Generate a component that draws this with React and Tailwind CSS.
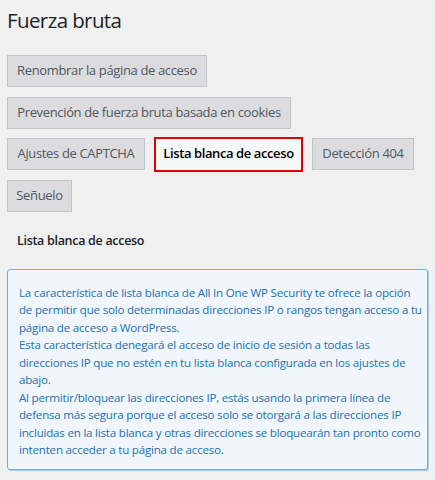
const tabBase =
  "h-[32px] flex items-center justify-center border border-[#c3c4c7] bg-[#dcdcde] text-[#50575e] text-[13px] tracking-[-0.35px] whitespace-nowrap";

function Tab({ w, children }) {
  return <div className={tabBase + " " + w}>{children}</div>;
}

const lines = [
  "La característica de lista blanca de All In One WP Security te ofrece la opción",
  "de permitir que solo determinadas direcciones IP o rangos tengan acceso a tu",
  "página de acceso a WordPress.",
  "Esta característica denegará el acceso de inicio de sesión a todas las",
  "direcciones IP que no estén en tu lista blanca configurada en los ajustes de",
  "abajo.",
  "Al permitir/bloquear las direcciones IP, estás usando la primera línea de",
  "defensa más segura porque el acceso solo se otorgará a las direcciones IP",
  "incluidas en la lista blanca y otras direcciones se bloquearán tan pronto como",
  "intenten acceder a tu página de acceso.",
];

export default function App() {
  return (
    <div className="min-h-[480px] w-[435px] bg-[#f0f0f1] pl-[7px] pt-[6px] font-['Open_Sans',sans-serif]">
      <h1 className="h-[29px] leading-[29px] text-[20.5px] tracking-[-0.6px] text-[#1d2327] font-normal">
        Fuerza bruta
      </h1>
      <div className="mt-[20px] flex flex-col items-start gap-y-[9.5px] w-[421px]">
        <Tab w="w-[200px]">Renombrar la página de acceso</Tab>
        <Tab w="w-[284px]">Prevención de fuerza bruta basada en cookies</Tab>
        <div className="flex items-center gap-x-[9px]">
          <Tab w="w-[138px]">Ajustes de CAPTCHA</Tab>
          <div className="h-[35px] -my-[1.5px] w-[149px] flex items-center justify-center border-2 border-[#e00000] bg-[#f6f7f7] text-[#000] text-[13px] font-semibold tracking-[-0.4px] whitespace-nowrap">
            Lista blanca de acceso
          </div>
          <Tab w="w-[102px]">Detección 404</Tab>
        </div>
        <Tab w="w-[65px]">Señuelo</Tab>
      </div>
      <h2 className="mt-[19px] pl-[10px] h-[20px] leading-[20px] text-[12.5px] font-semibold tracking-[-0.3px] text-[#1d2327]">
        Lista blanca de acceso
      </h2>
      <div className="mt-[18px] w-[421px] rounded-[3px] border border-[#72aee6] bg-[#f0f6fc] pl-[11px] pt-[14px] pb-[10.5px] shadow-[1px_1px_0_#a9c9ea] text-[#2271b1] text-[11.6px] tracking-[-0.22px] leading-[17.55px]">
        {lines.map((l, i) => (
          <div key={i} className="whitespace-nowrap">
            {l}
          </div>
        ))}
      </div>
    </div>
  );
}
